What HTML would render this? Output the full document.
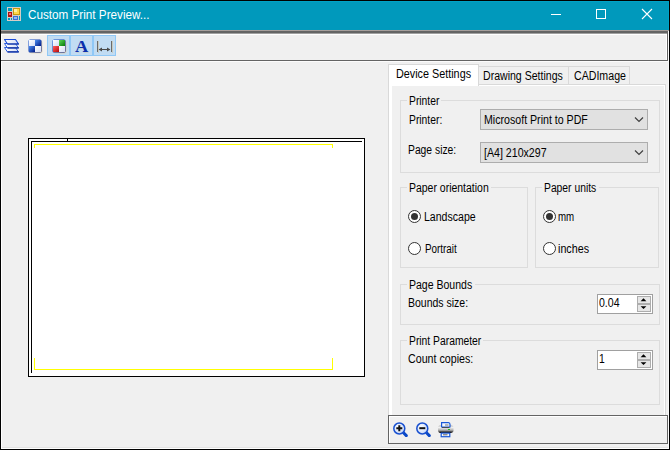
<!DOCTYPE html>
<html><head><meta charset="utf-8">
<style>
*{margin:0;padding:0;box-sizing:border-box}
html,body{width:670px;height:450px;overflow:hidden;background:#000}
body{position:relative;font-family:"Liberation Sans",sans-serif;font-size:12px;color:#000}
.a{position:absolute}
.t{position:absolute;white-space:nowrap;line-height:12px;transform-origin:0 0}
.gb{position:absolute;border:1px solid #dcdcdc}
.cb{position:absolute;background:#e1e1e1;border:1px solid #adadad}
.nud{position:absolute;background:#fff;border:1px solid #a0a0a0}
</style></head><body>
<!-- title bar -->
<div class="a" style="left:1px;top:1px;width:668px;height:29px;background:#0099bc"></div>
<div class="a" style="left:1px;top:1px;width:668px;height:1px;background:#00a2c6"></div>
<div class="a" style="left:1px;top:1px;width:1px;height:29px;background:#00a2c6"></div>
<div class="a" style="left:668px;top:1px;width:1px;height:29px;background:#00a2c6"></div>
<svg class="a" style="left:7px;top:7px" width="14" height="14" viewBox="0 0 14 14">
  <rect x="0" y="0" width="14" height="14" fill="#d6cdc6"/>
  <rect x="1" y="1" width="4" height="3" fill="#0099bc"/>
  <rect x="1" y="4" width="4" height="1" fill="#d6cdc6"/>
  <rect x="6" y="1" width="7" height="7" fill="#c89a10"/>
  <rect x="7" y="2" width="5" height="5" fill="#ffd84a"/>
  <rect x="7" y="2" width="3" height="3" fill="#fff0a0"/>
  <rect x="1" y="5" width="4" height="5" fill="#b01010"/>
  <rect x="2" y="6" width="2" height="2" fill="#f07070"/>
  <rect x="6" y="9" width="5" height="4" fill="#4070d0"/>
  <rect x="7" y="10" width="3" height="2" fill="#90b8f8"/>
  <rect x="12" y="9" width="1" height="4" fill="#0099bc"/>
  <rect x="1" y="11" width="2" height="2" fill="#0099bc"/>
  <rect x="4" y="11" width="1" height="2" fill="#0099bc"/>
</svg>
<div class="t" style="left:27.7px;top:9px;color:#fff;font-size:12px;transform:scaleX(0.975)">Custom Print Preview...</div>
<div class="a" style="left:551px;top:14px;width:10px;height:1px;background:#fff"></div>
<div class="a" style="left:596px;top:9px;width:10px;height:10px;border:1px solid #fff"></div>
<svg class="a" style="left:641px;top:8px" width="12" height="12" viewBox="0 0 12 12">
  <path d="M1 1L11 11M11 1L1 11" stroke="#fff" stroke-width="1.1"/>
</svg>
<!-- borders under title -->
<div class="a" style="left:1px;top:30px;width:668px;height:1px;background:#a69e9b"></div>
<div class="a" style="left:1px;top:31px;width:667px;height:2px;background:#646464"></div>
<div class="a" style="left:1px;top:33px;width:666px;height:1px;background:#a0a0a0"></div>
<div class="a" style="left:1px;top:34px;width:668px;height:415px;background:#fff"></div>
<div class="a" style="left:667px;top:31px;width:1px;height:30px;background:#646464"></div>
<div class="a" style="left:668px;top:31px;width:1px;height:418px;background:#fafafa"></div>
<!-- toolbar bg -->
<div class="a" style="left:2px;top:35px;width:664px;height:25px;background:#f0f0f0"></div>
<div class="a" style="left:1px;top:60px;width:667px;height:1px;background:#646464"></div>
<!-- content bg -->
<div class="a" style="left:2px;top:61px;width:666px;height:386px;background:#f0f0f0"></div>
<div class="a" style="left:2px;top:61px;width:666px;height:1px;background:#fcfcfc"></div>
<div class="a" style="left:2px;top:447px;width:666px;height:1px;background:#e3e3e3"></div>

<!-- toolbar buttons -->
<div class="a" style="left:47px;top:35px;width:23px;height:21px;background:#c1dcf3;border:1px solid #90c8f6"></div>
<div class="a" style="left:70px;top:35px;width:23px;height:21px;background:#c1dcf3;border:1px solid #90c8f6"></div>
<div class="a" style="left:93px;top:35px;width:23px;height:21px;background:#c1dcf3;border:1px solid #90c8f6"></div>

<!-- icon 1 layers -->
<svg class="a" style="left:2px;top:36px" width="20" height="20" viewBox="0 0 20 20">
  <defs><linearGradient id="lg1" x1="0" y1="0" x2="1" y2="0"><stop offset="0" stop-color="#fff"/><stop offset="1" stop-color="#d4dcf4"/></linearGradient></defs>
  <polygon points="2.5,11.5 13.5,11.5 16.5,16 5.5,16" fill="url(#lg1)" stroke="#2a5ce0" stroke-width="1" stroke-linejoin="round"/>
  <polygon points="2.5,7.5 13.5,7.5 16.5,12 5.5,12" fill="url(#lg1)" stroke="#2a5ce0" stroke-width="1" stroke-linejoin="round"/>
  <polygon points="2.5,3.5 13.5,3.5 16.5,8 5.5,8" fill="url(#lg1)" stroke="#1a4cd8" stroke-width="1.1" stroke-linejoin="round"/>
  <path d="M5.5 15.9 H16.8 M5.5 11.9 H16.8 M5.5 8 H16.8" stroke="#0a2a9a" stroke-width="1.2"/>
</svg>
<!-- icon 2 -->
<svg class="a" style="left:28px;top:39px" width="16" height="16" viewBox="0 0 16 16">
  <defs><linearGradient id="bg2" x1="0" y1="0" x2="1" y2="1"><stop offset="0" stop-color="#4a8cf0"/><stop offset="1" stop-color="#001a88"/></linearGradient>
  <linearGradient id="bd2" x1="0" y1="0" x2="1" y2="1"><stop offset="0" stop-color="#1a5ad8"/><stop offset="1" stop-color="#001070"/></linearGradient>
  <linearGradient id="wg" x1="0" y1="0" x2="1" y2="1"><stop offset="0" stop-color="#fff"/><stop offset="1" stop-color="#d4ddf6"/></linearGradient></defs>
  <rect x="1.5" y="1.5" width="13" height="13" rx="2" fill="#e6dcc4"/>
  <rect x="0.5" y="0.5" width="13" height="13" rx="1.6" fill="url(#bd2)"/>
  <rect x="7" y="1" width="6" height="6" fill="url(#bg2)"/>
  <rect x="1" y="7" width="6" height="6" fill="url(#bg2)"/>
  <rect x="1" y="1" width="6" height="6" fill="url(#wg)"/>
  <rect x="7" y="7" width="6" height="6" fill="url(#wg)"/>
</svg>
<!-- icon 3 -->
<svg class="a" style="left:52px;top:39px" width="16" height="16" viewBox="0 0 16 16">
  <defs><linearGradient id="gg" x1="0" y1="0" x2="1" y2="1"><stop offset="0" stop-color="#5ad85a"/><stop offset="1" stop-color="#087a08"/></linearGradient>
  <linearGradient id="rg" x1="0" y1="0" x2="1" y2="1"><stop offset="0" stop-color="#ff6060"/><stop offset="1" stop-color="#b80808"/></linearGradient></defs>
  <rect x="1.5" y="1.5" width="13" height="13" rx="2" fill="#d8cfb8"/>
  <rect x="0.5" y="0.5" width="13" height="13" rx="1.6" fill="url(#bd2)"/>
  <rect x="1" y="1" width="6" height="6" fill="url(#wg)"/>
  <rect x="7" y="1" width="6" height="6" fill="url(#gg)"/>
  <rect x="1" y="7" width="6" height="6" fill="url(#rg)"/>
  <rect x="7" y="7" width="6" height="6" fill="url(#wg)"/>
</svg>
<!-- icon 4 A -->
<div class="t" style="left:75px;top:38px;font-family:'Liberation Serif',serif;font-weight:bold;font-size:17px;line-height:17px;color:#0a30b0;transform:scaleX(1.08);text-shadow:1px 1px 0 rgba(210,190,140,0.35)">A</div>
<!-- icon 5 -->
<svg class="a" style="left:96px;top:40px" width="17" height="14" viewBox="0 0 17 14">
  <rect x="2" y="1" width="1" height="12" fill="#c8c0a8" opacity="0.7"/>
  <rect x="16" y="1" width="1" height="12" fill="#c8c0a8" opacity="0.7"/>
  <rect x="1" y="1" width="1" height="11" fill="#6a6a6a"/>
  <rect x="15" y="1" width="1" height="11" fill="#6a6a6a"/>
  <path d="M3.5 9.5 H13.5" stroke="#4a4a4a" stroke-width="1"/>
  <path d="M2.6 9.5 L6 7.4 L6 11.6 Z" fill="#4a4a4a"/>
  <path d="M14.4 9.5 L11 7.4 L11 11.6 Z" fill="#4a4a4a"/>
</svg>

<!-- preview page -->
<div class="a" style="left:28px;top:138px;width:337px;height:239px;background:#fff;border:1px solid #000"></div>
<div class="a" style="left:31px;top:141px;width:331px;height:1px;background:#000"></div>
<div class="a" style="left:31px;top:141px;width:1px;height:232px;background:#000"></div>
<div class="a" style="left:67px;top:138px;width:1px;height:4px;background:#000"></div>
<div class="a" style="left:34px;top:144px;width:299px;height:1px;background:#ff0"></div>
<div class="a" style="left:34px;top:144px;width:1px;height:4px;background:#ff0"></div>
<div class="a" style="left:332px;top:144px;width:1px;height:4px;background:#ff0"></div>
<div class="a" style="left:34px;top:369px;width:299px;height:1px;background:#ff0"></div>
<div class="a" style="left:34px;top:358px;width:1px;height:12px;background:#ff0"></div>
<div class="a" style="left:332px;top:358px;width:1px;height:12px;background:#ff0"></div>

<!-- tab control -->
<div class="a" style="left:388px;top:84px;width:278px;height:331px;background:#fff;border:1px solid #d9d9d9;border-bottom:none"></div>
<div class="a" style="left:392px;top:86px;width:272px;height:329px;background:#f0f0f0"></div>
<div class="a" style="left:478px;top:66px;width:91px;height:19px;background:#f0f0f0;border:1px solid #d9d9d9"></div>
<div class="a" style="left:568px;top:66px;width:62px;height:19px;background:#f0f0f0;border:1px solid #d9d9d9"></div>
<div class="a" style="left:388px;top:64px;width:91px;height:22px;background:#fff;border:1px solid #d9d9d9;border-bottom:none"></div>
<div class="t" style="left:396px;top:68px;transform:scaleX(0.9)">Device Settings</div>
<div class="t" style="left:483px;top:70px;transform:scaleX(0.88)">Drawing Settings</div>
<div class="t" style="left:574px;top:70px;transform:scaleX(0.885)">CADImage</div>

<!-- Printer group -->
<div class="gb" style="left:400px;top:100px;width:260px;height:73px"></div>
<div class="a" style="left:407px;top:99px;width:34px;height:3px;background:#f0f0f0"></div>
<div class="t" style="left:409px;top:95px;transform:scaleX(0.86)">Printer</div>
<div class="t" style="left:409px;top:114px;transform:scaleX(0.86)">Printer:</div>
<div class="cb" style="left:480px;top:109px;width:168px;height:21px"></div>
<div class="t" style="left:484px;top:114px;transform:scaleX(0.885)">Microsoft Print to PDF</div>
<svg class="a" style="left:634px;top:116px" width="10" height="7" viewBox="0 0 10 7"><path d="M1 1.5 L5 5.5 L9 1.5" fill="none" stroke="#404040" stroke-width="1.2"/></svg>
<div class="t" style="left:408px;top:144px;transform:scaleX(0.86)">Page size:</div>
<div class="cb" style="left:480px;top:142px;width:168px;height:21px"></div>
<div class="t" style="left:484px;top:147px;transform:scaleX(0.885)">[A4] 210x297</div>
<svg class="a" style="left:634px;top:149px" width="10" height="7" viewBox="0 0 10 7"><path d="M1 1.5 L5 5.5 L9 1.5" fill="none" stroke="#404040" stroke-width="1.2"/></svg>

<!-- Paper orientation -->
<div class="gb" style="left:400px;top:187px;width:128px;height:81px"></div>
<div class="a" style="left:407px;top:186px;width:84px;height:3px;background:#f0f0f0"></div>
<div class="t" style="left:408.7px;top:182px;transform:scaleX(0.872)">Paper orientation</div>
<svg class="a" style="left:407px;top:209px" width="15" height="15" viewBox="0 0 15 15"><circle cx="7.5" cy="7.5" r="6" fill="#fff" stroke="#333" stroke-width="1"/><circle cx="7.5" cy="7.5" r="3.5" fill="#333"/></svg>
<div class="t" style="left:424.4px;top:211px;transform:scaleX(0.88)">Landscape</div>
<svg class="a" style="left:407px;top:241px" width="15" height="15" viewBox="0 0 15 15"><circle cx="7.5" cy="7.5" r="6" fill="#fff" stroke="#333" stroke-width="1"/></svg>
<div class="t" style="left:424.5px;top:243px;transform:scaleX(0.82)">Portrait</div>

<!-- Paper units -->
<div class="gb" style="left:535px;top:187px;width:124px;height:81px"></div>
<div class="a" style="left:542px;top:186px;width:57px;height:3px;background:#f0f0f0"></div>
<div class="t" style="left:544px;top:182px;transform:scaleX(0.86)">Paper units</div>
<svg class="a" style="left:542px;top:209px" width="15" height="15" viewBox="0 0 15 15"><circle cx="7.5" cy="7.5" r="6" fill="#fff" stroke="#333" stroke-width="1"/><circle cx="7.5" cy="7.5" r="3.5" fill="#333"/></svg>
<div class="t" style="left:558.2px;top:211px;transform:scaleX(0.81)">mm</div>
<svg class="a" style="left:542px;top:241px" width="15" height="15" viewBox="0 0 15 15"><circle cx="7.5" cy="7.5" r="6" fill="#fff" stroke="#333" stroke-width="1"/></svg>
<div class="t" style="left:558.2px;top:243px;transform:scaleX(0.895)">inches</div>

<!-- Page Bounds -->
<div class="gb" style="left:400px;top:284px;width:260px;height:41px"></div>
<div class="a" style="left:407px;top:283px;width:68px;height:3px;background:#f0f0f0"></div>
<div class="t" style="left:409px;top:279px;transform:scaleX(0.877)">Page Bounds</div>
<div class="t" style="left:408px;top:297px;transform:scaleX(0.875)">Bounds size:</div>
<div class="nud" style="left:597px;top:294px;width:56px;height:20px"></div>
<div class="t" style="left:599px;top:297px;transform:scaleX(0.88)">0.04</div>
<div class="a" style="left:637px;top:296px;width:14px;height:8px;background:#e6e6e6;border:1px solid #adadad"></div>
<div class="a" style="left:637px;top:304px;width:14px;height:8px;background:#e6e6e6;border:1px solid #adadad"></div>
<svg class="a" style="left:637px;top:294px" width="14" height="20" viewBox="0 0 14 20"><path d="M3.6 7.2 L6.5 4.3 L9.4 7.2Z" fill="#000"/><path d="M3.6 12.2 L6.5 15.1 L9.4 12.2Z" fill="#000"/></svg>


<!-- Print Parameter -->
<div class="gb" style="left:400px;top:340px;width:260px;height:65px"></div>
<div class="a" style="left:407px;top:339px;width:76px;height:3px;background:#f0f0f0"></div>
<div class="t" style="left:409px;top:335px;transform:scaleX(0.86)">Print Parameter</div>
<div class="t" style="left:407.6px;top:353px;transform:scaleX(0.89)">Count copies:</div>
<div class="nud" style="left:597px;top:350px;width:56px;height:20px"></div>
<div class="t" style="left:599px;top:353px;transform:scaleX(0.86)">1</div>
<div class="a" style="left:637px;top:352px;width:14px;height:8px;background:#e6e6e6;border:1px solid #adadad"></div>
<div class="a" style="left:637px;top:360px;width:14px;height:8px;background:#e6e6e6;border:1px solid #adadad"></div>
<svg class="a" style="left:637px;top:350px" width="14" height="20" viewBox="0 0 14 20"><path d="M3.6 7.2 L6.5 4.3 L9.4 7.2Z" fill="#000"/><path d="M3.6 12.2 L6.5 15.1 L9.4 12.2Z" fill="#000"/></svg>


<!-- bottom toolbar -->
<div class="a" style="left:388px;top:415px;width:280px;height:29px;border:1px solid #646464;background:#f0f0f0"></div>
<div class="a" style="left:389px;top:416px;width:278px;height:1px;background:#fff"></div>
<div class="a" style="left:389px;top:416px;width:1px;height:27px;background:#fff"></div>

<svg class="a" style="left:392px;top:421px" width="16" height="16" viewBox="0 0 16 16">
  <defs><radialGradient id="mg" cx="0.4" cy="0.4" r="0.6"><stop offset="0" stop-color="#fff"/><stop offset="1" stop-color="#c8d8f8"/></radialGradient></defs>
  <path d="M11 11.3 L14.3 14.6" stroke="#0a48c8" stroke-width="3" stroke-linecap="round"/>
  <circle cx="7.3" cy="7.5" r="5.5" fill="url(#mg)" stroke="#1850d0" stroke-width="1.5"/>
  <path d="M4.3 7.2 H10.3 M7.3 4.2 V10.2" stroke="#111" stroke-width="2"/>
</svg>
<svg class="a" style="left:415px;top:421px" width="16" height="16" viewBox="0 0 16 16">
  <path d="M11 11.3 L14.3 14.6" stroke="#0a48c8" stroke-width="3" stroke-linecap="round"/>
  <circle cx="7.3" cy="7.5" r="5.5" fill="url(#mg)" stroke="#1850d0" stroke-width="1.5"/>
  <path d="M4.3 7.2 H10.3" stroke="#111" stroke-width="2"/>
</svg>
<svg class="a" style="left:437px;top:420px" width="18" height="18" viewBox="0 0 18 18">
  <defs><linearGradient id="pg" x1="0" y1="0" x2="0" y2="1"><stop offset="0" stop-color="#b8b8b8"/><stop offset="0.3" stop-color="#f0f0f0"/><stop offset="0.65" stop-color="#b0b0b0"/><stop offset="1" stop-color="#1a1a1a"/></linearGradient></defs>
  <rect x="1" y="5.2" width="15.5" height="7.6" rx="2.5" fill="url(#pg)"/>
  <path d="M4.6 7 V2.6 H11.5 Q13 2.6 13 4.5 V7 Z" fill="#f4f8ff" stroke="#1a58d8" stroke-width="1.2"/>
  <path d="M8 5 H11.5" stroke="#777" stroke-width="1"/>
  <rect x="5" y="7" width="7.5" height="0.8" fill="#333"/>
  <rect x="11" y="9" width="2" height="1" fill="#20c020"/>
  <rect x="2.5" y="11.8" width="12" height="1.2" fill="#111"/>
  <rect x="4.2" y="13.1" width="8.6" height="3.6" fill="#f4f8ff" stroke="#1a58d8" stroke-width="1.2"/>
  <path d="M6 14.8 H10.5" stroke="#666" stroke-width="1"/>
</svg>
</body></html>
